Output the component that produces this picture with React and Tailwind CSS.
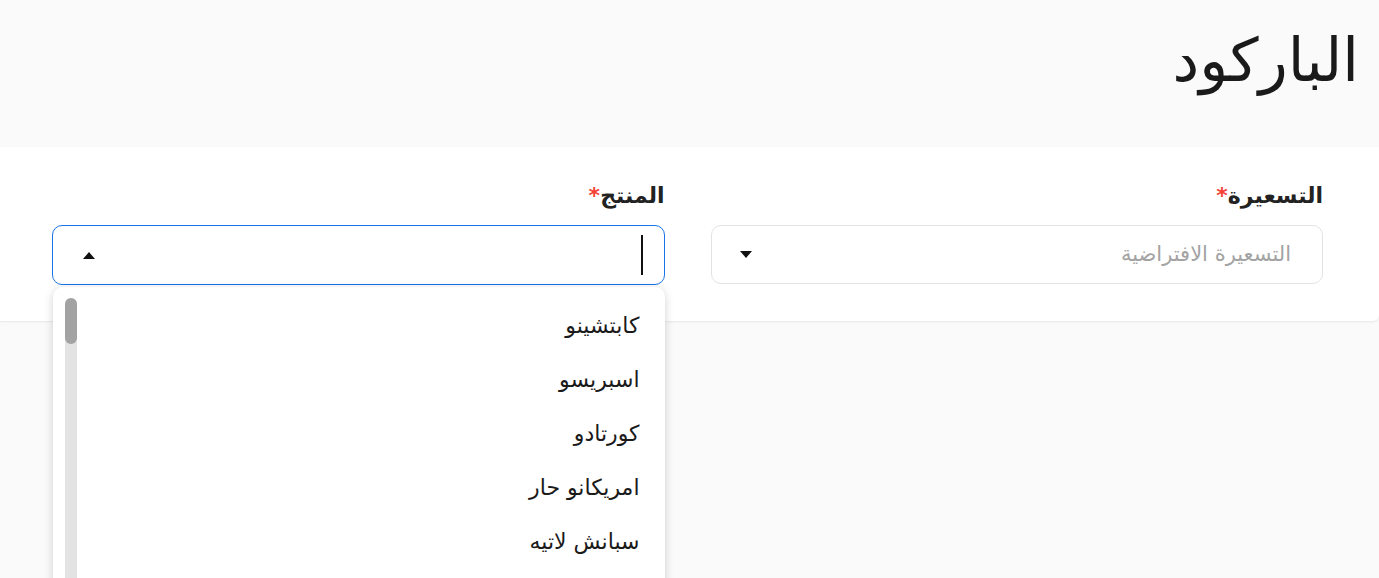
import React from 'react';

const products = ['كابتشينو', 'اسبريسو', 'كورتادو', 'امريكانو حار', 'سبانش لاتيه'];

export default function App() {
  return (
    <div
      dir="rtl"
      className="min-h-screen bg-[#fafafa] text-[#1a1a1a] overflow-hidden"
      style={{ fontFamily: '"DejaVu Sans", sans-serif' }}
    >
      {/* Header */}
      <div className="h-[147px] pr-[20px] pl-[22px] pt-[20px]">
        <h1 className="text-[60px] leading-[80px] font-normal">الباركود</h1>
      </div>

      {/* Form card */}
      <div className="bg-white rounded-br-md shadow-[0_1px_2px_rgba(0,0,0,0.08)] pt-[34px] pb-[36px] px-[56px] pl-[52px]">
        <div className="grid grid-cols-2 gap-[46px]">
          {/* Pricing */}
          <div>
            <label className="block text-[22px] leading-[30px] font-bold text-[#222] mb-[14px]">
              التسعيرة<span className="text-[#f44336]">*</span>
            </label>
            <div className="h-[59px] rounded-[10px] border border-[#e3e3e3] flex items-center justify-between pr-[31px] pl-[28px]">
              <span className="text-[21px] text-[#a3a3a3]">التسعيرة الافتراضية</span>
              <svg width="12" height="7" viewBox="0 0 12 7"><path d="M0 0h12L6 7z" fill="#111" /></svg>
            </div>
          </div>

          {/* Product */}
          <div className="relative">
            <label className="block text-[22px] leading-[30px] font-bold text-[#222] mb-[14px]">
              المنتج<span className="text-[#f44336]">*</span>
            </label>
            <div className="h-[60px] rounded-[10px] border border-[#1a73e8] flex items-center justify-between pr-[21px] pl-[30px]">
              <span className="w-[2px] h-[40px] bg-[#111]" />
              <svg width="12" height="7" viewBox="0 0 12 7"><path d="M0 7h12L6 0z" fill="#111" /></svg>
            </div>

            {/* Dropdown menu */}
            <div className="absolute top-[106px] right-0 left-[1px] h-[300px] bg-white rounded-t-[10px] shadow-[0_2px_10px_rgba(0,0,0,0.18)] flex z-10">
              <ul className="flex-1 pt-[11px] pr-[25px]">
                {products.map((p) => (
                  <li key={p} className="h-[54px] flex items-center text-[22px]">{p}</li>
                ))}
              </ul>
              <div className="w-[12px] ml-[12px] mt-[11px] bg-[#e3e3e3] rounded-t-full flex flex-col">
                <div className="h-[46px] rounded-full bg-[#a3a3a3]" />
              </div>
            </div>
          </div>
        </div>
      </div>
    </div>
  );
}
